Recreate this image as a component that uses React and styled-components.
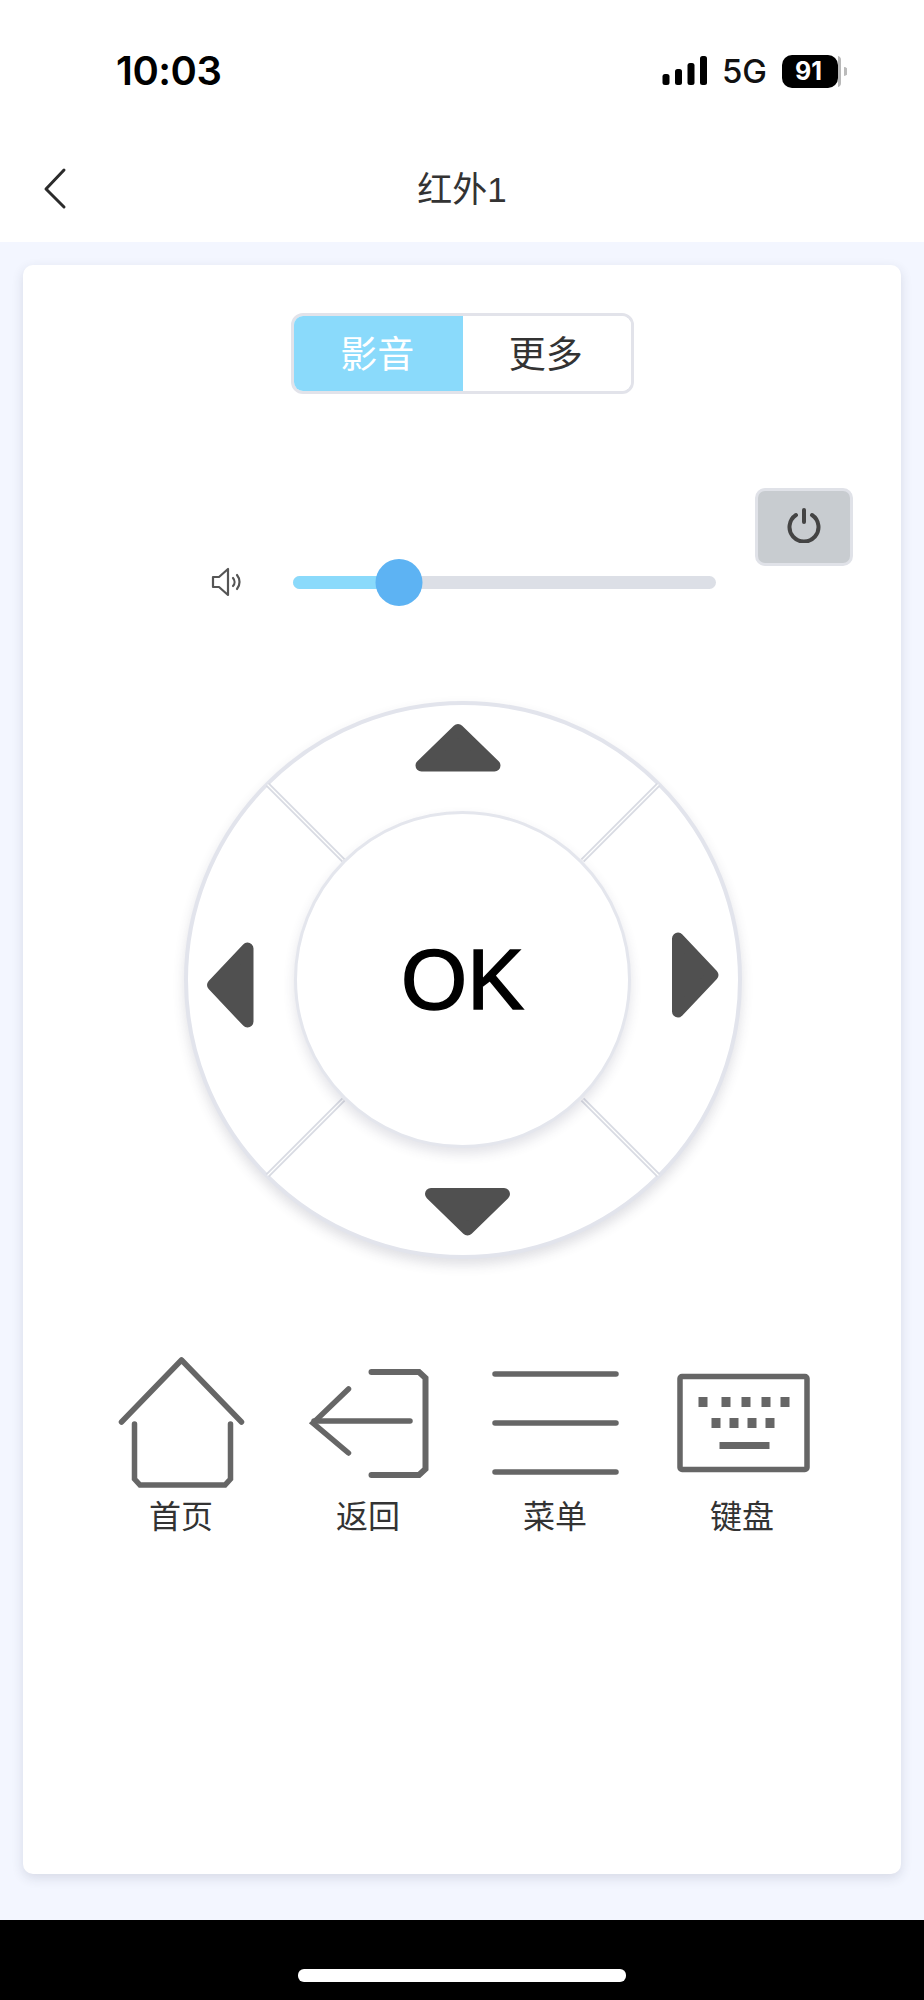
import React from "react";
import styled, { createGlobalStyle } from "styled-components";

const Global = createGlobalStyle`
  html, body { margin: 0; padding: 0; background: #fff; }
  * { box-sizing: border-box; }
  body { font-family: "Liberation Sans", "Noto Sans CJK SC", sans-serif; }
`;
const Page = styled.div`width: 924px; height: 2000px; display: flex; flex-direction: column; background: #f3f6ff;`;
const Header = styled.header`height: 242px; background: #fff; display: flex; flex-direction: column;`;
const StatusBar = styled.div`height: 130px; display: flex; align-items: flex-start; justify-content: space-between; padding: 48px 77px 0 116px;`;
const Time = styled.div`font-family: Inter, sans-serif; font-weight: 600; font-size: 40px; line-height: 46px; color: #000; letter-spacing: -0.5px;`;
const StatusRight = styled.div`display: flex; align-items: center; height: 46px;`;
const FiveG = styled.span`font-family: Inter, sans-serif; font-weight: 500; font-size: 33px; line-height: 46px; color: #111; margin: 0 15px 0 14px;`;
const Battery = styled.div`width: 56px; height: 33px; border-radius: 10px; background: #000; color: #fff; font-family: Inter, sans-serif; font-weight: 700; font-size: 25px; display: flex; align-items: center; justify-content: center; padding-right: 3px;`;
const Nav = styled.div`flex: 1; position: relative; display: flex; align-items: center; justify-content: center; padding-top: 7px;`;
const BackChevron = styled.svg`position: absolute; left: 40px; top: 36px;`;
const Title = styled.h1`margin: 0; font-weight: 400; font-size: 35px; line-height: 44px; color: #333;`;
const Main = styled.main`flex: 1; padding: 23px 23px 46px; min-height: 0;`;
const Card = styled.section`height: 100%; background: #fff; border-radius: 10px; box-shadow: 0 4px 12px rgba(40, 50, 80, 0.14); padding-top: 48px;`;
const Segmented = styled.div`width: 343px; height: 81px; margin-left: 268px; border: 3px solid #e2e3ea; border-radius: 12px; overflow: hidden; display: flex;`;
const Segment = styled.div`flex: 1; display: flex; align-items: center; justify-content: center; font-size: 37px; padding: 0 2px 4px 0; background: ${p => p.$active ? "#8adafb" : "#fff"}; color: ${p => p.$active ? "#fff" : "#333"};`;
const VolumeRow = styled.div`margin-top: 94px; height: 118px; padding-left: 188px; display: flex; align-items: flex-end;`;
const SpeakerIcon = styled.svg`margin-bottom: 9px; flex: none;`;
const Slider = styled.div`position: relative; width: 423px; height: 47px; margin-left: 51px; flex: none; display: flex; align-items: center;`;
const Track = styled.div`width: 100%; height: 13px; border-radius: 7px; background: #dcdfe6; overflow: hidden;`;
const Fill = styled.div`height: 100%; background: #8adafb;`;
const Thumb = styled.div`position: absolute; top: 0; width: 47px; height: 47px; border-radius: 50%; background: #5db3f3; transform: translateX(-50%);`;
const PowerButton = styled.div`width: 98px; height: 78px; margin-left: 39px; align-self: flex-start; flex: none; background: #c8ccd0; border: 3px solid #e0e2e8; border-radius: 10px; display: flex; align-items: center; justify-content: center; padding-bottom: 5px;`;
const Dial = styled.div`position: relative; width: 558px; height: 558px; margin: 94.5px 0 0 160.5px; border-radius: 50%; background: #fff; border: 4px solid #e2e4ec; box-shadow: 0 6px 12px rgba(60, 60, 90, 0.16); display: flex; align-items: center; justify-content: center;`;
const DialArt = styled.svg`position: absolute; left: -4px; top: -4px;`;
const OkButton = styled.div`position: relative; width: 337px; height: 337px; border-radius: 50%; background: #fff; border: 3px solid #e4e6ed; box-shadow: 0 6px 12px rgba(60, 60, 90, 0.14); display: flex; align-items: center; justify-content: center; font-size: 85px; color: #000; -webkit-text-stroke: 1.6px #000;`;
const ActionRow = styled.div`margin: 97.5px 0 0 64.5px; display: grid; grid-template-columns: repeat(4, 187px);`;
const Action = styled.div`display: flex; flex-direction: column; align-items: center;`;
const ActionLabel = styled.span`margin-top: 1px; font-size: 32px; line-height: 40px; color: #333;`;
const Footer = styled.footer`height: 80px; background: #000; display: flex; justify-content: center; padding-top: 49px;`;
const HomeBar = styled.div`width: 328px; height: 13px; border-radius: 6px; background: #fff;`;

const I = { fill: "none", stroke: "#666", strokeWidth: 5.5, strokeLinecap: "round", strokeLinejoin: "miter" };

const HomeIcon = () => (
  <svg width="187" height="140" viewBox="0 0 187 140" {...I}>
    <path d="M33.5 66 L93.5 4 L153.5 66" strokeLinejoin="round" />
    <path d="M46.5 68 V123 L52 129 H137 L142.5 123 V68" />
  </svg>
);
const BackIcon = () => (
  <svg width="187" height="140" viewBox="0 0 187 140" {...I}>
    <path d="M73.5 33 L38 67 L73.5 97" />
    <path d="M39 65 H135" />
    <path d="M96.5 16 H144 L150.5 22 V113 L144 119 H96.5" strokeWidth="6" />
  </svg>
);
const MenuIcon = () => (
  <svg width="187" height="140" viewBox="0 0 187 140" {...I}>
    <path d="M33 18 H154 M33 67 H154 M33 116 H154" />
  </svg>
);
const KeyboardIcon = () => {
  const row1 = [49.5, 72.5, 92.5, 112.5, 131.5];
  const row2 = [62.5, 80.5, 98.5, 116.5];
  return (
    <svg width="187" height="140" viewBox="0 0 187 140" {...I}>
      <rect x="31" y="20.5" width="127" height="93" rx="2" />
      <g fill="#666" stroke="none">
        {row1.map(x => <rect key={x} x={x} y="41" width="9" height="10" />)}
        {row2.map(x => <rect key={x} x={x} y="62" width="9" height="10" />)}
        <rect x="70.5" y="86" width="50" height="7" />
      </g>
    </svg>
  );
};

const actions = [
  { label: "首页", Icon: HomeIcon },
  { label: "返回", Icon: BackIcon },
  { label: "菜单", Icon: MenuIcon },
  { label: "键盘", Icon: KeyboardIcon },
];

const dividers = "M83.5 83.5 L159.5 159.5 M474.5 83.5 L398.5 159.5 M83.5 474.5 L159.5 398.5 M474.5 474.5 L398.5 398.5";

export default function App() {
  return (
    <Page>
      <Global />
      <Header>
        <StatusBar>
          <Time>10:03</Time>
          <StatusRight>
            <svg width="46" height="30" viewBox="0 0 46 30" fill="#000">
              <rect x="0.5" y="18" width="7" height="11" rx="2.5" />
              <rect x="13" y="13" width="7" height="16" rx="2.5" />
              <rect x="25.5" y="7" width="7" height="22" rx="2.5" />
              <rect x="38" y="0" width="7" height="29" rx="2.5" />
            </svg>
            <FiveG>5G</FiveG>
            <Battery>91</Battery>
            <svg width="9" height="33" viewBox="0 0 9 33">
              <path d="M0 1 a4 4 0 0 1 3 4 v23 a4 4 0 0 1 -3 4z" fill="#b8b8b8" />
              <path d="M6 12 a4 4 0 0 1 0 9z" fill="#bbb" />
            </svg>
          </StatusRight>
        </StatusBar>
        <Nav>
          <BackChevron width="30" height="44" viewBox="0 0 30 44" fill="none" stroke="#2b2b2b" strokeWidth="3" strokeLinecap="round" strokeLinejoin="round">
            <path d="M24 4 L6 23 L24 41" />
          </BackChevron>
          <Title>红外1</Title>
        </Nav>
      </Header>
      <Main>
        <Card>
          <Segmented>
            <Segment $active>影音</Segment>
            <Segment>更多</Segment>
          </Segmented>
          <VolumeRow>
            <SpeakerIcon width="31" height="30" viewBox="0 0 31 30" fill="none" stroke="#555" strokeWidth="2.2" strokeLinejoin="round" strokeLinecap="round">
              <path d="M2 10 H8 L17 2 V28 L8 20 H2 Z" />
              <path d="M22 11 a6 6 0 0 1 0 8" />
              <path d="M26 8 a11 11 0 0 1 0 14" />
            </SpeakerIcon>
            <Slider>
              <Track><Fill style={{ width: "25%" }} /></Track>
              <Thumb style={{ left: "25%" }} />
            </Slider>
            <PowerButton>
              <svg width="36" height="36" viewBox="0 0 36 36" fill="none" stroke="#444" strokeWidth="4" strokeLinecap="round">
                <path d="M10 8 A14.5 14.5 0 1 0 26 8" />
                <path d="M18 3 V15" />
              </svg>
            </PowerButton>
          </VolumeRow>
          <Dial>
            <DialArt width="558" height="558" viewBox="0 0 558 558">
              <g stroke="#d9dbe3" strokeWidth="5" fill="none"><path d={dividers} /></g>
              <g stroke="#fff" strokeWidth="1.2" fill="none"><path d={dividers} /></g>
              <g fill="#505050" stroke="#505050" strokeWidth="12" strokeLinejoin="round">
                <path d="M274 29 L237.5 64.5 H310.5 Z" />
                <path d="M283.5 528.5 L247 493 H320 Z" />
                <path d="M29 284 L63.5 247.5 V320.5 Z" />
                <path d="M528.5 274 L494 237.5 V310.5 Z" />
              </g>
            </DialArt>
            <OkButton>OK</OkButton>
          </Dial>
          <ActionRow>
            {actions.map(({ label, Icon }) => (
              <Action key={label}>
                <Icon />
                <ActionLabel>{label}</ActionLabel>
              </Action>
            ))}
          </ActionRow>
        </Card>
      </Main>
      <Footer><HomeBar /></Footer>
    </Page>
  );
}
